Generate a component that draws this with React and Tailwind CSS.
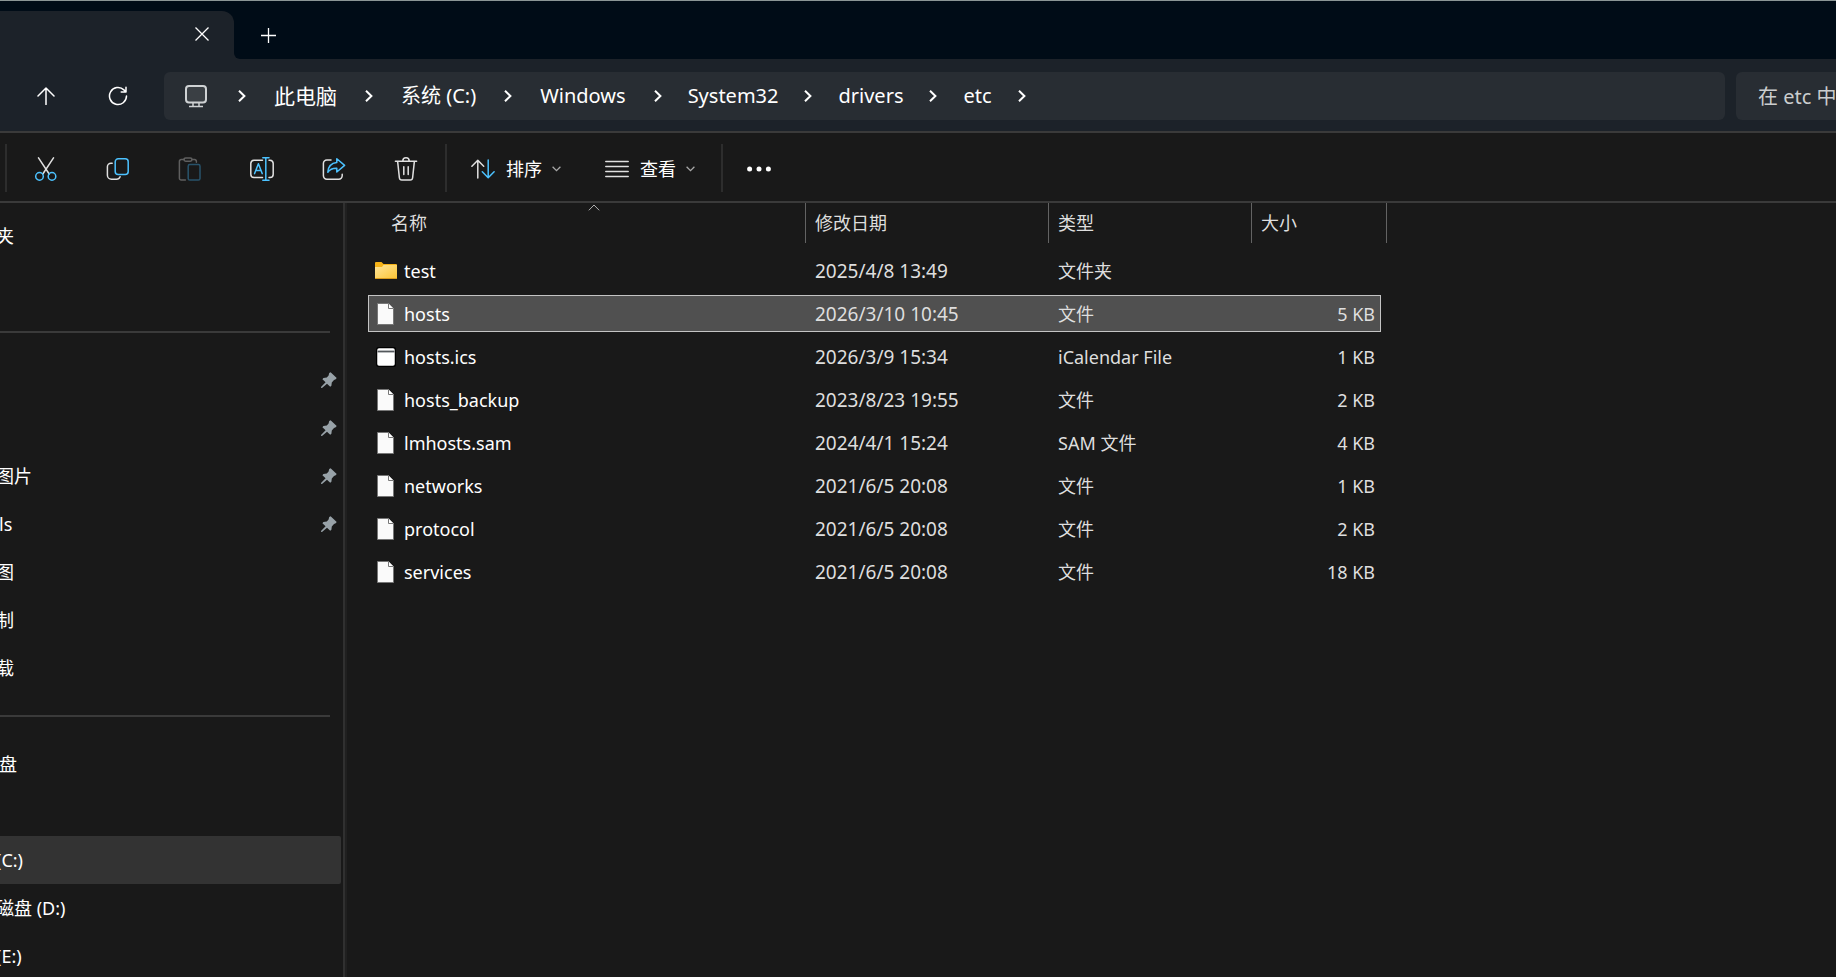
import React from 'react';

const crumbs = ['此电脑', '系统 (C:)', 'Windows', 'System32', 'drivers', 'etc'];

const sidebarItems = [
  { id: 1, label: '夹' },
  { id: 2, label: '' },
  { id: 3, divider: true },
  { id: 4, label: '', pinned: true },
  { id: 5, label: '', pinned: true },
  { id: 6, label: '图片', pinned: true },
  { id: 7, label: 'ls', pinned: true, root: true },
  { id: 8, label: '图' },
  { id: 9, label: '制' },
  { id: 10, label: '载' },
  { id: 11, divider: true },
  { id: 12, label: '盘', root: true },
  { id: 13, label: '' },
  { id: 14, label: '(C:)', active: true },
  { id: 15, label: '磁盘 (D:)' },
  { id: 16, label: '(E:)' },
];

const files = [
  { name: 'test', date: '2025/4/8 13:49', type: '文件夹', size: '', icon: 'folder' },
  { name: 'hosts', date: '2026/3/10 10:45', type: '文件', size: '5 KB', icon: 'file', selected: true },
  { name: 'hosts.ics', date: '2026/3/9 15:34', type: 'iCalendar File', size: '1 KB', icon: 'calendar' },
  { name: 'hosts_backup', date: '2023/8/23 19:55', type: '文件', size: '2 KB', icon: 'file' },
  { name: 'lmhosts.sam', date: '2024/4/1 15:24', type: 'SAM 文件', size: '4 KB', icon: 'file' },
  { name: 'networks', date: '2021/6/5 20:08', type: '文件', size: '1 KB', icon: 'file' },
  { name: 'protocol', date: '2021/6/5 20:08', type: '文件', size: '2 KB', icon: 'file' },
  { name: 'services', date: '2021/6/5 20:08', type: '文件', size: '18 KB', icon: 'file' },
];

const Icon = ({ size = 24, children }) => (
  <svg
    width={size}
    height={size}
    viewBox={`0 0 ${size} ${size}`}
    fill="none"
    stroke="#e0e0e0"
    strokeWidth="1.5"
    strokeLinecap="round"
    strokeLinejoin="round"
    className="shrink-0"
    aria-hidden="true"
  >
    {children}
  </svg>
);

const CutIcon = () => (
  <Icon>
    <path d="M4.5 0.8 15.2 17M19.5 0.8 8.8 17" />
    <circle cx="5.5" cy="19.4" r="3.8" stroke="#4cc2ff" />
    <circle cx="18" cy="19.4" r="3.8" stroke="#4cc2ff" />
  </Icon>
);

const CopyIcon = () => (
  <Icon>
    <path d="M6.2 6.2H5A3.6 3.6 0 0 0 1.4 9.8v8.4A4 4 0 0 0 5.4 22.2h5.2a3.8 3.8 0 0 0 3.5-2.4" />
    <rect x="9.2" y="1.8" width="13" height="15.6" rx="3" stroke="#4cc2ff" />
  </Icon>
);

const PasteIcon = () => (
  <Icon>
    <g stroke="#5f5f5f">
      <path d="M6 2.6H3.2A1.8 1.8 0 0 0 1.4 4.4v16.8A1.8 1.8 0 0 0 3.2 23h4.2M14 2.6h2.6a1.8 1.8 0 0 1 1.8 1.8v.8" />
      <rect x="6" y="0.9" width="8" height="3.4" rx="1.7" />
    </g>
    <rect x="10.2" y="7.6" width="11.8" height="15.4" rx="1.6" stroke="#28536b" />
  </Icon>
);

const RenameIcon = () => (
  <Icon>
    <path d="M12.5 3.2H4A3.4 3.4 0 0 0 .8 6.6v10.6A3.4 3.4 0 0 0 4 20.6h8.5M19 3.2h1a3.4 3.4 0 0 1 3.2 3.4v10.6a3.4 3.4 0 0 1-3.2 3.4h-1" />
    <g stroke="#4cc2ff">
      <path d="M4.6 16.6 8.4 6.8l3.8 9.8M6 13.4h4.8" />
      <path d="M15.8 1v22M12.8 .8h6.2M12.8 23.2h6.2" />
    </g>
  </Icon>
);

const ShareIcon = () => (
  <Icon>
    <path d="M9 3H4.8A3.4 3.4 0 0 0 1.4 6.4v12.4a3.4 3.4 0 0 0 3.4 3.4h12A3.4 3.4 0 0 0 20.2 18.8v-1.6" />
    <path
      d="M14.8 1.8 22.6 8.4 14.8 15V11.2c-4.2-.2-7 1.2-9 4 .4-5.4 3.4-9 9-9.6V1.8Z"
      stroke="#4cc2ff"
    />
  </Icon>
);

const TrashIcon = () => (
  <Icon>
    <path d="M1.4 4.2h21.2M3.6 4.2 5.4 20.8a2.4 2.4 0 0 0 2.4 2.2h8.4a2.4 2.4 0 0 0 2.4-2.2L20.4 4.2M8.8 4a3.2 3.2 0 0 1 6.4 0M9.8 9.8v7.8M14.2 9.8v7.8" />
  </Icon>
);

const SortIcon = () => (
  <Icon>
    <path d="M6.8 21V3.4M.9 9.2 6.8 3.3l5.9 5.9" />
    <path d="M17.2 3v17.6M11.3 14.8l5.9 5.9 5.9-5.9" stroke="#4cc2ff" />
  </Icon>
);

const ViewIcon = () => (
  <Icon>
    <path d="M.8 4.5h22.4M.8 9.5h22.4M.8 14.5h22.4M.8 19.5h22.4" />
  </Icon>
);

const ChevronDown = () => (
  <svg width="9" height="6" viewBox="0 0 9 6" fill="none" stroke="#a8a8a8" strokeWidth="1.3" aria-hidden="true">
    <path d="M.6 .8 4.5 4.7 8.4 .8" />
  </svg>
);

const ChevronRight = () => (
  <svg width="8" height="12" viewBox="0 0 8 12" fill="none" stroke="#fff" strokeWidth="2" className="shrink-0" aria-hidden="true">
    <path d="M1 .8 6.4 6 1 11.2" />
  </svg>
);

const PinIcon = () => (
  <svg width="16" height="16" viewBox="0 0 16 16" fill="#98a2a8" aria-hidden="true">
    <path d="M9.6 0.3 15.7 6.1 14.7 7.3 13 8 10.8 10.6 10.4 13.8 9.2 14.8 6 11.8 1 16 0 15.8V15L4.6 10.2 1.4 7.2 2.4 6 5.8 5.4 7.6 3.4 8.2 1Z" />
  </svg>
);

const FileIcon = ({ kind }) => {
  if (kind === 'folder') {
    return (
      <svg width="22" height="18" viewBox="0 0 22 18" aria-hidden="true">
        <defs>
          <linearGradient id="folder" x1="0" y1="0" x2="1" y2="1">
            <stop offset="0" stopColor="#ffe59a" />
            <stop offset="1" stopColor="#fcc535" />
          </linearGradient>
        </defs>
        <path d="M0 1a1 1 0 0 1 1-1h5.5L8.5 2H21a1 1 0 0 1 1 1v6H0Z" fill="#f7b317" />
        <path d="M0 5h7l1.5-2H22v13.5H0Z" fill="url(#folder)" />
        <path d="M0 16.5h22" stroke="#d99a1c" />
      </svg>
    );
  }
  if (kind === 'calendar') {
    return (
      <svg width="20" height="20" viewBox="0 0 20 20" aria-hidden="true">
        <rect x=".5" y=".5" width="19" height="19" rx="2.5" fill="#fff" stroke="#000" strokeWidth="1.5" />
        <path d="M1.5 4.5h17" stroke="#54585c" strokeWidth="1.8" />
      </svg>
    );
  }
  return (
    <svg width="18" height="22" viewBox="0 0 18 22" aria-hidden="true">
      <path d="M.5 .5h11l5 5v16H.5Z" fill="#fafafa" stroke="#777" />
      <path d="M11.5 .5v5h5" fill="#fff" stroke="#777" />
    </svg>
  );
};

const toolButtons = [
  { label: '剪切', icon: <CutIcon /> },
  { label: '复制', icon: <CopyIcon /> },
  { label: '粘贴', icon: <PasteIcon />, disabled: true },
  { label: '重命名', icon: <RenameIcon /> },
  { label: '共享', icon: <ShareIcon /> },
  { label: '删除', icon: <TrashIcon /> },
];

const Separator = () => <div className="h-12 w-0.5 shrink-0 bg-[#2d2d2d]" />;

const TitleBar = () => (
  <header className="flex h-[59px] shrink-0 items-end border-t border-[#8b9696] bg-[#000c17]">
    <div className="flex h-12 w-[234px] items-center justify-end rounded-tr-xl bg-[#1c2229] pb-0.5 pr-6">
      <button type="button" aria-label="关闭标签页" className="flex h-4 w-4 items-center justify-center">
        <svg width="14" height="14" viewBox="0 0 14 14" stroke="#fff" strokeWidth="1.3" aria-hidden="true">
          <path d="M.5 .5 13.5 13.5M13.5 .5 .5 13.5" />
        </svg>
      </button>
    </div>
    <div className="h-2 w-2 bg-[#1c2229]">
      <div className="h-full w-full rounded-bl-md bg-[#000c17]" />
    </div>
    <button type="button" aria-label="新建标签页" className="ml-3 flex h-12 w-7 items-center justify-center">
      <svg width="15" height="15" viewBox="0 0 15 15" stroke="#fff" strokeWidth="1.3" aria-hidden="true">
        <path d="M7.5 0v15M0 7.5h15" />
      </svg>
    </button>
  </header>
);

const NavBar = () => (
  <nav className="flex h-[74px] shrink-0 items-center border-b-2 border-[#3a3a3a] bg-[#1c2229] pl-2.5 pt-0.5 text-[20px]">
    <button type="button" aria-label="上移" className="flex h-12 w-[72px] items-center justify-center">
      <Icon size={18}>
        <path d="M9 17.5V1M1 9 9 1l8 8" stroke="#fff" />
      </Icon>
    </button>
    <button type="button" aria-label="刷新" className="flex h-12 w-[72px] items-center justify-center">
      <Icon size={20}>
        <path d="M18.5 10a8.500 8.500 0 1 1-2.600-6.100l1.900 1.900M18 1.200v4.800h-4.800" stroke="#fff" />
      </Icon>
    </button>
    <div className="ml-2.5 flex h-12 min-w-0 flex-1 items-center rounded-md bg-[#282d33] pl-5 text-white">
      <svg width="24" height="24" viewBox="0 0 24 24" fill="none" stroke="#cfd2d4" strokeWidth="2" className="mr-[30px] shrink-0" aria-hidden="true">
        <rect x="2" y="2" width="20" height="16.5" rx="3" fill="#3a3f44" />
        <path d="M9 18.5v3.5M15 18.5v3.5M5 22.5h14" strokeWidth="1.5" />
      </svg>
      <ChevronRight />
      {crumbs.map((crumb, index) => (
        <React.Fragment key={crumb}>
          <a href="#" className={`whitespace-nowrap ${index < 3 ? 'mx-7' : 'mx-[26px]'} ${index === 0 ? 'text-[21px]' : ''}`}>
            {crumb}
          </a>
          <ChevronRight />
        </React.Fragment>
      ))}
    </div>
    <input
      type="text"
      aria-label="搜索"
      placeholder="在 etc 中搜索"
      className="ml-[11px] h-12 w-[100px] rounded-l-md bg-[#282d33] pl-[22px] text-white outline-none placeholder:text-[#cbcdcf]"
    />
  </nav>
);

const Toolbar = () => (
  <div className="flex h-[70px] shrink-0 items-center border-b-2 border-[#3a3a3a] pl-[5px] pt-0.5 text-white">
    <Separator />
    <div className="mx-[3px] flex pt-0.5">
      {toolButtons.map((button) => (
        <button
          key={button.label}
          type="button"
          aria-label={button.label}
          disabled={button.disabled}
          className="flex h-12 w-[72px] items-center justify-center"
        >
          {button.icon}
        </button>
      ))}
    </div>
    <Separator />
    <button type="button" className="ml-6 flex h-12 items-center pt-0.5">
      <SortIcon />
      <span className="ml-[11px] mr-2.5">排序</span>
      <ChevronDown />
    </button>
    <button type="button" className="ml-11 mr-[26px] flex h-12 items-center pt-0.5">
      <ViewIcon />
      <span className="ml-[11px] mr-2.5">查看</span>
      <ChevronDown />
    </button>
    <Separator />
    <button type="button" aria-label="更多" className="ml-6 flex h-12 items-center pt-0.5">
      <svg width="24" height="6" viewBox="0 0 24 6" fill="#fff" aria-hidden="true">
        <circle cx="2.6" cy="3" r="2.5" />
        <circle cx="12" cy="3" r="2.5" />
        <circle cx="21.4" cy="3" r="2.5" />
      </svg>
    </button>
  </div>
);

const Sidebar = () => (
  <aside className="w-[347px] shrink-0 overflow-hidden border-r-2 border-[#202020] text-white">
    <div className="h-full border-r-2 border-[#303030] pt-[9px]">
      <ul className="pr-0.5">
        {sidebarItems.map((item) =>
          item.divider ? (
            <li key={item.id} className="flex h-12 items-center pr-[11px]">
              <div className="h-0.5 w-full bg-[#3a3a3a]" />
            </li>
          ) : (
            <li
              key={item.id}
              className={`flex h-12 items-center justify-between rounded-r-xs pr-1 ${item.active ? 'bg-[#333]' : ''}`}
            >
              <span className={`whitespace-nowrap ${item.root ? '-ml-px' : '-ml-1'}`}>{item.label}</span>
              {item.pinned && <PinIcon />}
            </li>
          )
        )}
      </ul>
    </div>
  </aside>
);

const headCell = 'flex h-10 items-center border-r border-[#636363]';

const FileTable = () => (
  <table className="ml-[21px] w-[1019px] table-fixed border-collapse self-start text-left text-[#dedede]">
    <colgroup>
      <col className="w-[438px]" />
      <col className="w-[243px]" />
      <col className="w-[203px]" />
      <col className="w-[129px]" />
      <col className="w-[6px]" />
    </colgroup>
    <thead>
      <tr className="h-[46px] align-top">
        <th className="relative p-0 font-normal">
          <svg
            width="12"
            height="7"
            viewBox="0 0 12 7"
            fill="none"
            stroke="#b0b0b0"
            className="absolute left-[220px] top-px"
            aria-hidden="true"
          >
            <path d="M.8 6.3 6 1l5.2 5.3" />
          </svg>
          <div className={`${headCell} pl-[23px]`}>名称</div>
        </th>
        <th className="p-0 font-normal">
          <div className={`${headCell} pl-[9px]`}>修改日期</div>
        </th>
        <th className="p-0 font-normal">
          <div className={`${headCell} pl-[9px]`}>类型</div>
        </th>
        <th colSpan={2} className="p-0 font-normal">
          <div className={`${headCell} pl-[9px]`}>大小</div>
        </th>
      </tr>
    </thead>
    <tbody>
      {files.map((file) => {
        const cell = `flex h-[37px] items-center whitespace-nowrap border-y ${
          file.selected ? 'border-[#c4c4c4] bg-[#505050]' : 'border-transparent'
        }`;
        return (
          <tr key={file.name} className="h-[43px]" aria-selected={!!file.selected}>
            <td className="p-0">
              <div className={`${cell} border-l text-white`}>
                <span className="mr-1.5 flex w-[29px] justify-end">
                  <span className="flex w-6 justify-center">
                    <FileIcon kind={file.icon} />
                  </span>
                </span>
                {file.name}
              </div>
            </td>
            <td className="p-0">
              <div className={`${cell} pl-[9px] text-[19px]`}>{file.date}</div>
            </td>
            <td className="p-0">
              <div className={`${cell} pl-[9px]`}>{file.type}</div>
            </td>
            <td className="p-0">
              <div className={`${cell} justify-end border-r pr-[5px]`}>{file.size}</div>
            </td>
          </tr>
        );
      })}
    </tbody>
  </table>
);

const App = () => {
  return (
    <div className="flex h-screen flex-col overflow-hidden bg-[#191919] font-['Noto_Sans','Noto_Sans_CJK_SC',sans-serif] text-[18px] leading-6">
      <TitleBar />
      <NavBar />
      <Toolbar />
      <main className="flex min-h-0 flex-1">
        <Sidebar />
        <FileTable />
      </main>
    </div>
  );
};

export default App;
